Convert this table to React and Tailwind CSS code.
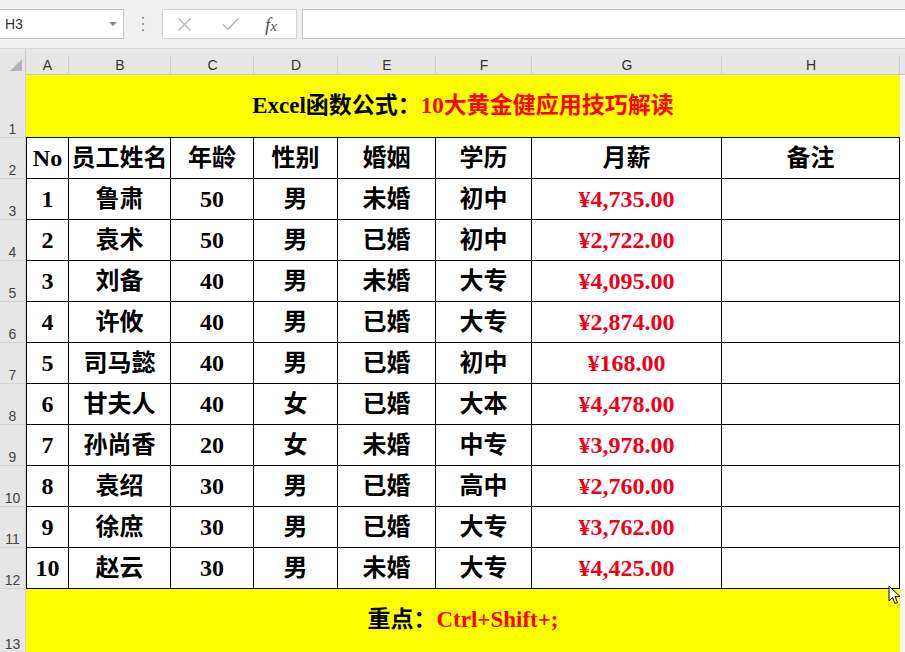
import React from 'react';

const serif = "font-['Liberation_Serif','Noto_Sans_CJK_SC',serif]";
const ui = "font-['Liberation_Sans','Noto_Sans_CJK_SC',sans-serif]";
const cols = 'grid grid-cols-[43px_102px_83px_84px_98px_96px_190px_178px]';

const data = [
  [1, '鲁肃', 50, '男', '未婚', '初中', '¥4,735.00'],
  [2, '袁术', 50, '男', '已婚', '初中', '¥2,722.00'],
  [3, '刘备', 40, '男', '未婚', '大专', '¥4,095.00'],
  [4, '许攸', 40, '男', '已婚', '大专', '¥2,874.00'],
  [5, '司马懿', 40, '男', '已婚', '初中', '¥168.00'],
  [6, '甘夫人', 40, '女', '已婚', '大本', '¥4,478.00'],
  [7, '孙尚香', 20, '女', '未婚', '中专', '¥3,978.00'],
  [8, '袁绍', 30, '男', '已婚', '高中', '¥2,760.00'],
  [9, '徐庶', 30, '男', '已婚', '大专', '¥3,762.00'],
  [10, '赵云', 30, '男', '未婚', '大专', '¥4,425.00'],
];

const headers = ['No', '员工姓名', '年龄', '性别', '婚姻', '学历', '月薪', '备注'];
const letters = ['A', 'B', 'C', 'D', 'E', 'F', 'G', 'H'];

const RowHead = ({ n, h }) => (
  <div className={`w-[26px] shrink-0 ${h} bg-[#e6e6e6] border-b border-r border-[#d2d2d2] flex items-end justify-center pb-[1px] text-[14px] leading-none text-[#444] ${ui}`}>
    {n}
  </div>
);

const Toolbar = () => (
  <div className={`h-[48px] bg-[#f0f0f0] flex items-center ${ui}`}>
    <div className="w-[124px] h-[30px] bg-white border border-l-0 border-[#c6c6c6] flex items-center justify-between pl-[5px] pr-[6px]">
      <span className="text-[14px] text-[#333]">H3</span>
      <svg width="8" height="5" viewBox="0 0 8 5"><path d="M0 0 L8 0 L4 4 Z" fill="#888" /></svg>
    </div>
    <div className="w-[38px] flex justify-center">
      <svg width="4" height="16" viewBox="0 0 4 16">
        <circle cx="2" cy="2" r="1.2" fill="#9a9a9a" />
        <circle cx="2" cy="8" r="1.2" fill="#9a9a9a" />
        <circle cx="2" cy="14" r="1.2" fill="#9a9a9a" />
      </svg>
    </div>
    <div className="w-[135px] h-[30px] bg-white border border-[#d6d6d6] flex items-center pl-[14px]">
      <svg width="15" height="15" viewBox="0 0 15 15"><path d="M1.5 1.5 L13.5 13.5 M13.5 1.5 L1.5 13.5" stroke="#b3b3b3" strokeWidth="1.4" /></svg>
      <svg className="ml-[30px]" width="17" height="14" viewBox="0 0 17 14"><path d="M1 7.5 L6 12.5 L16 1.5" stroke="#b3b3b3" strokeWidth="1.5" fill="none" /></svg>
      <span className="ml-[26px] font-['Liberation_Serif',serif] italic text-[19px] text-[#555] leading-none">
        f<span className="text-[15px]">x</span>
      </span>
    </div>
    <div className="w-[5px]" />
    <div className="flex-1 h-[30px] bg-white border border-r-0 border-[#c6c6c6]" />
  </div>
);

const ColHeads = () => (
  <div className={`flex h-[27px] bg-[#e6e6e6] border-t border-[#d8d8d8] ${ui}`}>
    <div className="w-[26px] shrink-0 flex items-end justify-end pr-[3px] pb-[4px] border-r border-[#c8c8c8]">
      <svg width="12" height="12" viewBox="0 0 12 12"><path d="M12 0 L12 12 L0 12 Z" fill="#b4b4b4" /></svg>
    </div>
    <div className={cols}>
      {letters.map((l) => (
        <div key={l} className="relative flex items-end justify-center pb-[2px] text-[14px] leading-none text-[#333] border-b border-[#c9c9c9]">
          {l}
          <div className="absolute right-0 top-[7px] bottom-0 w-px bg-[#cfcfcf]" />
        </div>
      ))}
    </div>
    <div className="flex-1 border-b border-[#c9c9c9]" />
  </div>
);

const Cell = ({ children, cls = '', first }) => (
  <div className={`flex items-center justify-center border-r border-b border-black ${first ? 'border-l' : ''} ${cls}`}>
    {children}
  </div>
);

export default function App() {
  return (
    <div className="relative w-[905px] h-[652px] overflow-hidden bg-white">
      <Toolbar />
      <ColHeads />

      <div className="flex h-[63px]">
        <RowHead n={1} h="h-[63px]" />
        <div className={`w-[874px] h-[63px] bg-[#ffff00] border-b border-black flex items-center justify-center font-bold text-[23px] ${serif}`}>
          <span className="text-black">Excel函数公式：</span>
          <span className="text-[#ff0000]">10大黄金健应用技巧解读</span>
        </div>
        <div className="flex-1 bg-[#f7f7f7]" />
      </div>

      <div className="flex h-[41px]">
        <RowHead n={2} h="h-[41px]" />
        <div className={`${cols} h-[41px] font-bold text-[24px] text-black ${serif}`}>
          {headers.map((h, i) => (
            <Cell key={h} first={i === 0}>{h}</Cell>
          ))}
        </div>
        <div className="flex-1" />
      </div>

      {data.map((r, idx) => (
        <div key={r[0]} className="flex h-[41px]">
          <RowHead n={idx + 3} h="h-[41px]" />
          <div className={`${cols} h-[41px] font-bold text-[24px] text-black ${serif}`}>
            {r.map((v, i) => (
              <Cell key={i} first={i === 0} cls={i === 6 ? 'text-[#ee0018]' : ''}>{v}</Cell>
            ))}
            <Cell />
          </div>
          <div className="flex-1" />
        </div>
      ))}

      <div className="flex h-[64px]">
        <RowHead n={13} h="h-[64px]" />
        <div className={`w-[874px] h-[64px] bg-[#ffff00] flex items-center justify-center pb-[2px] font-bold text-[23px] ${serif}`}>
          <span className="text-black">重点：</span>
          <span className="text-[#ff0000]">Ctrl+Shift+;</span>
        </div>
        <div className="flex-1 bg-[#f7f7f7]" />
      </div>

      <svg className="absolute left-[888px] top-[585px]" width="13" height="20" viewBox="0 0 13 20">
        <path d="M1 1 L1 16 L4.5 12.5 L7 18.5 L9.5 17.5 L7 11.5 L12 11.5 Z" fill="white" stroke="black" strokeWidth="1" strokeLinejoin="round" />
      </svg>
    </div>
  );
}
